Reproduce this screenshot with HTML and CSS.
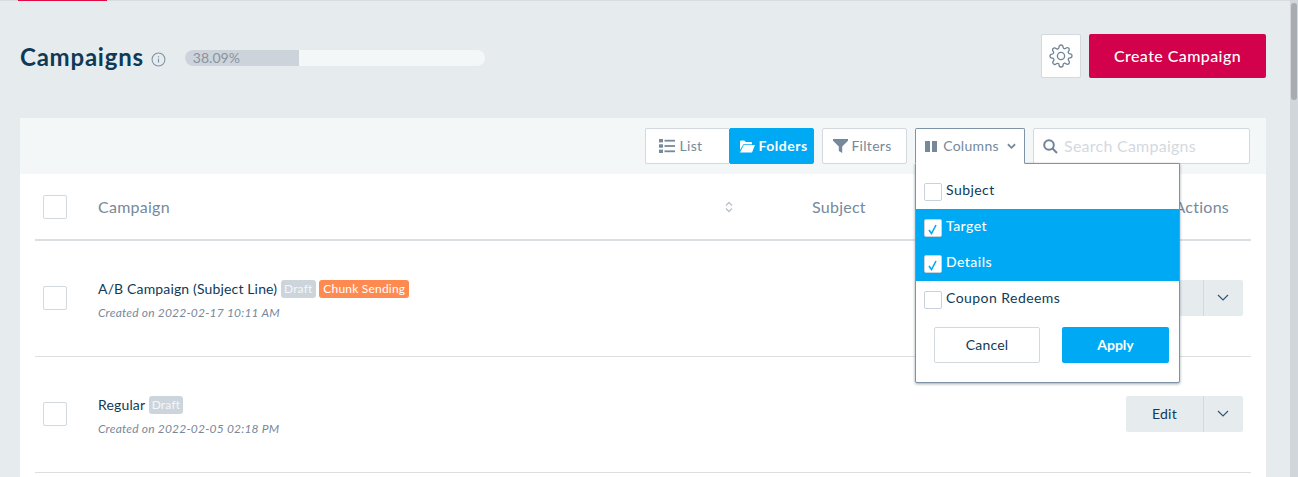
FILE: index.html
```html
<!DOCTYPE html>
<html lang="en">
<head>
<meta charset="utf-8">
<title>Campaigns</title>
<link rel="stylesheet" href="styles.css">
</head>
<body>
<div class="app">
  <main class="main">
    <div class="topline"><span class="topline-accent"></span></div>
    <header class="page-head">
      <h1 class="title">Campaigns</h1>
      <svg class="info" viewBox="0 0 14 14" width="15" height="15"><circle cx="7" cy="7" r="6" fill="none" stroke="#7f93a6" stroke-width="1"/><path d="M7 6.2v3.6M7 4v1.2" stroke="#7f93a6" stroke-width="1.1" fill="none"/></svg>
      <div class="progress"><div class="progress-fill" style="width:38.09%"><span>38.09%</span></div></div>
      <div class="head-actions">
        <button class="gear-btn" aria-label="Settings">
          <svg viewBox="0 0 24 24" width="24" height="24" fill="none" stroke="#6f8496" stroke-width="1.3" stroke-linejoin="round"><circle cx="12" cy="12" r="3.6"/><path d="M19.4 15a1.65 1.65 0 0 0 .33 1.82l.06.06a2 2 0 1 1-2.83 2.83l-.06-.06a1.65 1.65 0 0 0-2.8 1.17V21a2 2 0 1 1-4 0v-.09a1.65 1.65 0 0 0-2.8-1.12l-.06.06a2 2 0 1 1-2.83-2.83l.06-.06a1.65 1.65 0 0 0-1.17-2.8H3a2 2 0 1 1 0-4h.09a1.65 1.65 0 0 0 1.12-2.8l-.06-.06a2 2 0 1 1 2.83-2.83l.06.06a1.65 1.65 0 0 0 1.82.33H9a1.65 1.65 0 0 0 1-1.51V3a2 2 0 1 1 4 0v.09a1.65 1.65 0 0 0 2.8 1.12l.06-.06a2 2 0 1 1 2.83 2.83l-.06.06a1.65 1.65 0 0 0 1.17 2.8H21a2 2 0 1 1 0 4h-.09a1.65 1.65 0 0 0-1.51 1z"/></svg>
        </button>
        <button class="create-btn">Create Campaign</button>
      </div>
    </header>
    <section class="card">
      <div class="toolbar">
        <div class="view-toggle">
          <button class="tool-btn list-btn">
            <svg viewBox="0 0 16 14" width="16" height="14" fill="#76899b"><rect x="0" y="0" width="4" height="3.4"/><rect x="0" y="5.3" width="4" height="3.4"/><rect x="0" y="10.6" width="4" height="3.4"/><rect x="5.5" y="0.8" width="10.5" height="1.8"/><rect x="5.5" y="6.1" width="10.5" height="1.8"/><rect x="5.5" y="11.4" width="10.5" height="1.8"/></svg>
            <span class="lbl">List</span>
          </button>
          <button class="tool-btn folders-btn">
            <svg viewBox="0 0 16 13" width="15" height="13" fill="#fff"><path d="M0 1.5C0 .7.6 0 1.4 0h3.2l1.6 1.6h5.4c.7 0 1.2.6 1.2 1.2V4H3.6L0 10.2z"/><path d="M4 5h12l-3.2 8H0z"/></svg>
            <span class="lbl">Folders</span>
          </button>
        </div>
        <button class="tool-btn filters-btn">
          <svg viewBox="0 0 15 14" width="15" height="14" fill="#76899b"><path d="M0 0h15v1.8L9.2 7.6V14L5.8 12V7.6L0 1.8z"/></svg>
          <span class="lbl">Filters</span>
        </button>
        <div class="columns">
          <button class="tool-btn columns-btn">
            <svg viewBox="0 0 12 11" width="12" height="11" fill="#76899b"><rect width="5" height="11"/><rect x="7" width="5" height="11"/></svg>
            <span class="lbl">Columns</span>
            <svg class="caret" viewBox="0 0 10 7" width="9" height="7" fill="none" stroke="#76899b" stroke-width="2"><path d="M1 1l4 4 4-4"/></svg>
          </button>
          <div class="menu">
            <div class="menu-list">
              <label class="menu-item"><span class="box"></span>Subject</label>
              <label class="menu-item on"><span class="box"><svg viewBox="0 0 16 16" width="16" height="16" fill="none" stroke="#00a9f4" stroke-width="1.6"><path d="M4 10l2.5 3.5L11 5"/></svg></span>Target</label>
              <label class="menu-item on"><span class="box"><svg viewBox="0 0 16 16" width="16" height="16" fill="none" stroke="#00a9f4" stroke-width="1.6"><path d="M4 10l2.5 3.5L11 5"/></svg></span>Details</label>
              <label class="menu-item"><span class="box"></span>Coupon Redeems</label>
            </div>
            <div class="menu-foot">
              <button class="cancel-btn">Cancel</button>
              <button class="apply-btn">Apply</button>
            </div>
          </div>
        </div>
        <div class="search">
          <svg viewBox="0 0 15 15" width="15" height="15" fill="none" stroke="#6f8496" stroke-width="2"><circle cx="6" cy="6" r="4.8"/><path d="M9.5 9.5L14 14"/></svg>
          <span class="placeholder">Search Campaigns</span>
        </div>
      </div>
      <div class="table">
        <div class="row head-row">
          <span class="check"></span>
          <span class="col-name">Campaign</span>
          <svg class="sort" viewBox="0 0 8 12" width="8" height="12" fill="none" stroke="#b9c3cc" stroke-width="1.4"><path d="M1 4.5L4 1.5l3 3M1 7.5l3 3 3-3"/></svg>
          <span class="col-subject">Subject</span>
          <span class="col-actions">Actions</span>
        </div>
        <div class="row body-row">
          <span class="check"></span>
          <div class="col-name">
            <div class="name-line">A/B Campaign (Subject Line) <span class="tag tag-draft">Draft</span> <span class="tag tag-chunk">Chunk Sending</span></div>
            <div class="created">Created on 2022-02-17 10:11 AM</div>
          </div>
          <div class="split"><button class="split-main">Edit</button><button class="split-caret" aria-label="More"><svg viewBox="0 0 12 7" width="12" height="7" fill="none" stroke="#33566f" stroke-width="1.2"><path d="M1 1l5 5 5-5"/></svg></button></div>
        </div>
        <div class="row body-row">
          <span class="check"></span>
          <div class="col-name">
            <div class="name-line">Regular <span class="tag tag-draft">Draft</span></div>
            <div class="created">Created on 2022-02-05 02:18 PM</div>
          </div>
          <div class="split"><button class="split-main">Edit</button><button class="split-caret" aria-label="More"><svg viewBox="0 0 12 7" width="12" height="7" fill="none" stroke="#33566f" stroke-width="1.2"><path d="M1 1l5 5 5-5"/></svg></button></div>
        </div>
      </div>
    </section>
  </main>
  <div class="scrollbar"><div class="thumb"></div></div>
</div>
</body>
</html>
```
FILE: styles.css
```css
* { box-sizing: border-box; }
html, body { margin: 0; height: 100%; overflow: hidden; }
body { font-family: "Lato", "Open Sans", sans-serif; color: #0f3a57; background: #e6ebee; }
button { font: inherit; cursor: pointer; }
.app { display: flex; height: 477px; overflow: hidden; }
.main { flex: 1; min-width: 0; padding: 0 24px 0 20px; }
.topline { height: 1px; margin: 0 -24px 0 -20px; background: #d9dcdf; padding-left: 18px; }
.topline-accent { display: block; width: 89px; height: 1px; background: #e00a46; }
.page-head { display: flex; align-items: center; height: 44px; margin-top: 33px; }
.title { margin: 2px 0 0; font-size: 24px; font-weight: 700; line-height: 44px; letter-spacing: .78px; color: #0f3a57; }
.info { margin: 7px 0 0 7px; flex: none; }
.progress { width: 300px; height: 16px; margin: 3px 0 0 19px; border-radius: 8px; background: #f4f7f8; overflow: hidden; }
.progress-fill { height: 100%; background: #cdd3db; padding-left: 8px; font-size: 14px; line-height: 16px; color: #87949f; }
.head-actions { margin-left: auto; display: flex; gap: 8px; }
.gear-btn { width: 40px; height: 44px; padding: 0; background: #fff; border: 1px solid #d3d9df; border-radius: 2px; display: flex; align-items: center; justify-content: center; }
.create-btn { width: 177px; height: 44px; background: #d3004c; color: #fff; border: 0; border-radius: 2px; font-size: 16px; font-weight: 500; letter-spacing: .42px; padding: 0 0 2px; }
.card { margin-top: 40px; background: #fff; border-radius: 2px 2px 0 0; height: 360px; }
.toolbar { height: 56px; background: #f4f7f8; display: flex; align-items: flex-start; padding: 10px 16px 0 0; justify-content: flex-end; }
.view-toggle { display: flex; margin-right: 8px; }
.tool-btn { height: 36px; display: flex; align-items: center; justify-content: center; gap: 5px; background: #fff; border: 1px solid #d3d9df; font-size: 14px; letter-spacing: .3px; color: #76899b; border-radius: 2px; padding: 0; }
.lbl { margin-bottom: 2px; }
.list-btn { width: 84px; border-right: 0; border-radius: 2px 0 0 2px; padding-right: 14px; gap: 5px; }
.folders-btn { width: 85px; background: #00a9f4; border-color: #00a9f4; color: #fff; font-weight: 700; gap: 3px; letter-spacing: .5px; padding-left: 5px; }
.filters-btn { width: 85px; margin-right: 8px; gap: 3px; padding-right: 4px; }
.columns { position: relative; margin-right: 8px; }
.columns-btn { width: 110px; position: relative; z-index: 3; border-color: #7f93a6; border-bottom-color: #fff; border-radius: 2px 2px 0 0; gap: 6px; padding-left: 1px; }
.caret { margin-left: 2px; }
.menu { position: absolute; z-index: 2; top: 35px; left: 0; width: 265px; height: 220px; background: #fff; border: 1px solid #7f93a6; border-radius: 0 0 2px 2px; box-shadow: 0 1px 3px rgba(40,60,80,.45); padding-top: 9px; }
.menu-item { height: 36px; display: flex; align-items: center; gap: 4px; padding-left: 8px; font-size: 14px; color: #0f3a57; letter-spacing: .45px; padding-bottom: 4px; }
.menu-item.on { background: #00a9f4; color: #fff; font-weight: 500; }
.box { width: 18px; height: 18px; background: #fff; border: 1px solid #c9d2da; border-radius: 2px; margin-top: 5px; flex: none; }
.box svg { display: block; }
.menu-foot { display: flex; gap: 22px; padding: 10px 0 0 18px; }
.cancel-btn { width: 106px; height: 36px; background: #fff; border: 1px solid #d3d9df; border-radius: 2px; color: #0f3a57; font-size: 14px; letter-spacing: .15px; padding: 0 0 2px; }
.apply-btn { width: 107px; height: 36px; background: #00a9f4; border: 0; border-radius: 2px; color: #fff; font-size: 14px; font-weight: 700; padding: 0 0 2px; }
.search { width: 217px; height: 36px; background: #fff; border: 1px solid #d3d9df; border-radius: 2px; display: flex; align-items: center; gap: 6px; padding-left: 9px; font-size: 16px; letter-spacing: .25px; color: #d3d9df; }
.placeholder { margin-bottom: 2px; }
.table { margin: 0 15px; }
.row { display: flex; align-items: center; padding-left: 8px; }
.head-row { height: 67px; border-bottom: 2px solid #dcdfe2; color: #76899b; font-size: 16px; letter-spacing: .25px; }
.body-row { height: 116px; border-bottom: 1px solid #dcdfe2; padding-bottom: 2px; }
.check { width: 24px; height: 24px; flex: none; background: #fff; border: 1px solid #d3d9e0; border-radius: 2px; margin-right: 31px; }
.col-name { flex: 1; min-width: 0; }
.body-row .col-name { padding-top: 4px; }
.head-row .col-name { flex: none; width: 627px; }
.sort { flex: none; }
.col-subject { margin-left: 79px; }
.col-actions { margin-left: auto; margin-right: 22px; }
.name-line { font-size: 14px; line-height: 20px; letter-spacing: .15px; color: #0f3a57; }
.tag { display: inline-block; height: 18px; padding: 0 4px; border-radius: 3px; font-size: 12px; line-height: 18px; letter-spacing: .2px; color: #fff; vertical-align: 1px; }
.tag-draft { background: #cdd5dc; color: #f4f7f8; padding: 0 3px; }
.tag-chunk { background: #ff8a50; }
.created { margin-top: 6px; font-size: 12px; line-height: 16px; letter-spacing: .2px; font-style: italic; color: #76899b; }
.split { display: flex; margin-right: 8px; }
.split-main { width: 77px; height: 36px; background: #e6ebee; border: 0; border-radius: 2px 0 0 2px; font-size: 14px; letter-spacing: .2px; color: #0f3a57; }
.split-caret { width: 40px; height: 36px; background: #e6ebee; border: 0; border-left: 1px solid #d3d9df; border-radius: 0 2px 2px 0; display: flex; align-items: center; justify-content: center; padding: 0 1px 0 0; }
.scrollbar { width: 8px; background: #d1d5dc; position: relative; flex: none; padding: 3px 1px 0; }
.thumb { height: 97px; background: #a8acb2; border-radius: 3px; }
```
